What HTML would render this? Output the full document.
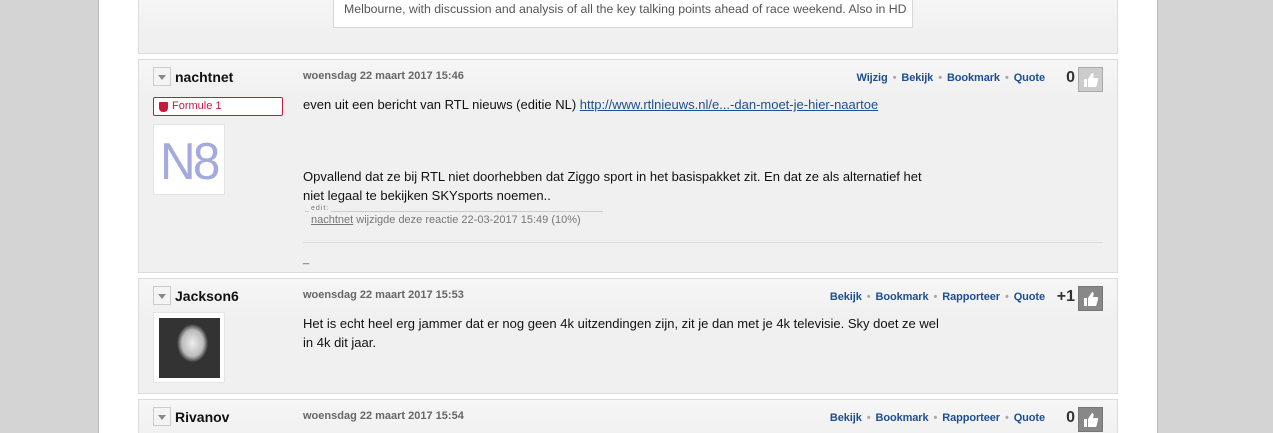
<!DOCTYPE html>
<html style="height:433px;overflow:hidden"><head><style>
*{margin:0;padding:0;box-sizing:border-box}
body{width:1273px;height:433px;overflow:hidden;background:#d4d4d4;font-family:"Liberation Sans",Arial,sans-serif;position:relative}
.page{position:absolute;left:98px;width:1060px;top:0;height:433px;background:#fff;border-left:1px solid #bbb;border-right:1px solid #bbb}
.card{position:absolute;left:138px;width:980px;background:linear-gradient(#f6f6f6,#f0f0f0 40px);border:1px solid #dcdcdc}
.tog{position:absolute;left:14px;top:7px;width:18px;height:19px;border:1px solid #ccc;background:#f4f4f4}
.tog:after{content:"";position:absolute;left:4px;top:7px;border-left:4px solid transparent;border-right:4px solid transparent;border-top:5px solid #888}
.name{position:absolute;left:36px;top:9px;font-weight:bold;font-size:14px;color:#111}
.date{position:absolute;left:164px;top:10px;font-size:11px;color:#666;font-weight:bold}
.acts{position:absolute;right:72px;top:12px;font-size:11px;color:#1d4f91;font-weight:bold;letter-spacing:-0.1px}
.acts i{font-style:normal;color:#aaa;margin:0 5px}
.score{position:absolute;right:42px;top:9px;font-size:16px;font-weight:bold;color:#333}
.thumb{position:absolute;right:14px;top:7px;width:25px;height:25px;border:1px solid #aaa;background:#ccc}
.thumb.d{background:#888;border-color:#777}
.txt{position:absolute;left:164px;font-size:13px;color:#111;line-height:19px}
.av{position:absolute;left:14px;width:72px;height:71px;background:#fff;border:1px solid #e4e4e4}
</style></head><body>
<div class="page"></div>
<div class="card" style="top:-5px;height:59px"></div>
<div style="position:absolute;left:333px;top:-2px;width:580px;height:30px;background:#fff;border:1px solid #d8d8d8;font-size:12.3px;color:#555;padding:3px 0 0 10px;white-space:nowrap;overflow:hidden">Melbourne, with discussion and analysis of all the key talking points ahead of race weekend. Also in HD</div>

<div class="card" style="top:59px;height:214px">
<div class="tog"></div><div class="name">nachtnet</div>
<div class="date">woensdag 22 maart 2017 15:46</div>
<div class="acts">Wijzig<i>•</i>Bekijk<i>•</i>Bookmark<i>•</i>Quote</div>
<div class="score">0</div>
<div class="thumb"><svg width="23" height="23" viewBox="0 0 23 23"><path d="M5 11h3v8H5zM9 11l4-6c1 0 2 1 1.5 3l-.5 2h4c1 0 1.5 1 1 2l-1.5 6c-.3 1-1 1-2 1H9z" fill="#fff"/></svg></div>
<div style="position:absolute;left:14px;top:37px;width:130px;height:19px;border:1px solid #c8193c;border-radius:2px;background:#fff;color:#c8193c;font-size:11px;padding:2px 0 0 18px">Formule 1<span style="position:absolute;left:5px;top:4px;width:9px;height:10px;background:#c8193c;border-radius:1px 1px 4px 4px"></span></div>
<div class="av" style="top:64px"><span style="position:absolute;left:6px;top:7px;font-size:52px;color:#a4aade;letter-spacing:-3px;transform:scaleX(0.95);transform-origin:left">N8</span></div>
<div class="txt" style="top:35px">even uit een bericht van RTL nieuws (editie NL) <u style="color:#1d4f91">http://www.rtlnieuws.nl/e...-dan-moet-je-hier-naartoe</u></div>
<div class="txt" style="top:107px">Opvallend dat ze bij RTL niet doorhebben dat Ziggo sport in het basispakket zit. En dat ze als alternatief het<br>niet legaal te bekijken SKYsports noemen..</div>
<div style="position:absolute;left:166px;top:151px;width:298px;border-top:1px solid #ccc"></div>
<div style="position:absolute;left:170px;top:145px;font-size:7px;color:#777;background:#f0f0f0;padding:0 2px;letter-spacing:1px">edit:</div>
<div style="position:absolute;left:172px;top:154px;font-size:11px;color:#777"><u>nachtnet</u> wijzigde deze reactie 22-03-2017 15:49 (10%)</div>
<div style="position:absolute;left:164px;top:182px;width:800px;border-top:1px solid #ddd"></div>
<div style="position:absolute;left:164px;top:193px;font-size:11px;color:#555">_</div>
</div>

<div class="card" style="top:278px;height:116px">
<div class="tog"></div><div class="name">Jackson6</div>
<div class="date">woensdag 22 maart 2017 15:53</div>
<div class="acts">Bekijk<i>•</i>Bookmark<i>•</i>Rapporteer<i>•</i>Quote</div>
<div class="score">+1</div>
<div class="thumb d"><svg width="23" height="23" viewBox="0 0 23 23"><path d="M5 11h3v8H5zM9 11l4-6c1 0 2 1 1.5 3l-.5 2h4c1 0 1.5 1 1 2l-1.5 6c-.3 1-1 1-2 1H9z" fill="#fff"/></svg></div>
<div class="av" style="top:33px"><div style="position:absolute;left:5px;top:5px;width:61px;height:60px;background:radial-gradient(ellipse 32% 40% at 55% 42%,#eee,#bbb 55%,#333 80%),#333"></div></div>
<div class="txt" style="top:35px">Het is echt heel erg jammer dat er nog geen 4k uitzendingen zijn, zit je dan met je 4k televisie. Sky doet ze wel<br>in 4k dit jaar.</div>
</div>

<div class="card" style="top:399px;height:34px;border-bottom:none">
<div class="tog"></div><div class="name">Rivanov</div>
<div class="date">woensdag 22 maart 2017 15:54</div>
<div class="acts">Bekijk<i>•</i>Bookmark<i>•</i>Rapporteer<i>•</i>Quote</div>
<div class="score">0</div>
<div class="thumb d"><svg width="23" height="23" viewBox="0 0 23 23"><path d="M5 11h3v8H5zM9 11l4-6c1 0 2 1 1.5 3l-.5 2h4c1 0 1.5 1 1 2l-1.5 6c-.3 1-1 1-2 1H9z" fill="#fff"/></svg></div>
</div>
</body></html>
